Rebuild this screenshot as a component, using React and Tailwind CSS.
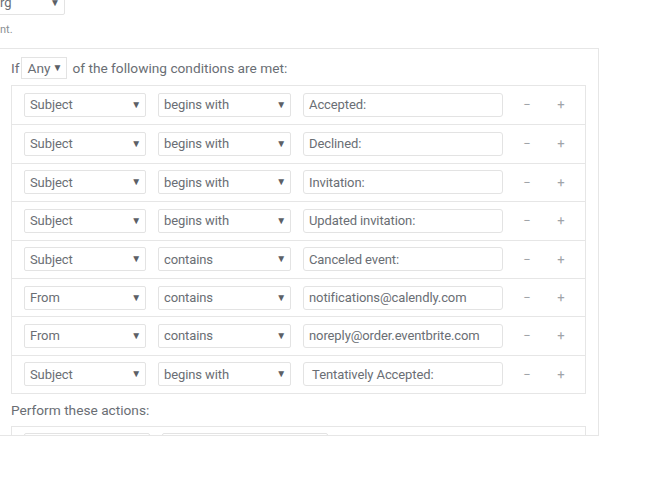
import React from 'react';

const conditions = [
  { field: 'Subject', op: 'begins with', value: 'Accepted:' },
  { field: 'Subject', op: 'begins with', value: 'Declined:' },
  { field: 'Subject', op: 'begins with', value: 'Invitation:' },
  { field: 'Subject', op: 'begins with', value: 'Updated invitation:' },
  { field: 'Subject', op: 'contains', value: 'Canceled event:' },
  { field: 'From', op: 'contains', value: 'notifications@calendly.com' },
  { field: 'From', op: 'contains', value: 'noreply@order.eventbrite.com' },
  { field: 'Subject', op: 'begins with', value: '\u00a0Tentatively Accepted:' },
];

const Arrow = () => <span className="text-[10px] leading-none text-[#5c6066]">▼</span>;

const Select = ({ label, width }) => (
  <div
    className={`flex h-6 items-center justify-between rounded-[2px] border border-[#e3e3e3] bg-white pl-[5px] pr-[4px] text-[13px] tracking-[-0.1px] text-[#6a6e74] ${width}`}
  >
    <span>{label}</span>
    <Arrow />
  </div>
);

const ConditionRow = ({ field, op, value, first }) => (
  <div
    className={`flex h-[38.4px] items-center pl-3 ${first ? '' : 'border-t border-[#e6e6e6]'}`}
  >
    <Select label={field} width="w-[122px]" />
    <div className="ml-3">
      <Select label={op} width="w-[133px]" />
    </div>
    <div className="ml-3 flex h-6 w-[200px] items-center rounded-[3px] border border-[#e3e3e3] bg-white px-[5px] text-[13px] tracking-[-0.1px] text-[#6a6e74]">
      {value}
    </div>
    <span className="ml-[20px] w-[8px] text-center text-[13px] text-[#a0a4a8]">−</span>
    <span className="ml-[26px] w-[8px] text-center text-[13px] text-[#a0a4a8]">+</span>
  </div>
);

export default function App() {
  return (
    <div className="h-[481px] w-[656px] overflow-hidden bg-white font-['Roboto','Liberation_Sans',sans-serif]">
      <div className="-mt-[9px] -ml-[6px] flex h-6 w-[71px] items-center justify-between rounded-[2px] border border-[#e3e3e3] pl-[5px] pr-[4px] text-[13px] text-[#6a6e74]">
        <span>rg</span>
        <Arrow />
      </div>
      <div className="mt-[7px] text-[11px] leading-4 text-[#8a8f94]">nt.</div>

      <div className="-ml-px mt-[10px] h-[388px] w-[600px] overflow-hidden border border-[#e6e6e6] pl-[11px] pr-3">
        <div className="mt-[8px] flex items-center text-[13.7px] text-[#6a6e74]">
          <span>If</span>
          <div className="ml-[2px] flex h-[22px] w-[46px] items-center justify-between border border-[#e3e3e3] pl-[5px] pr-[4px]">
            <span>Any</span>
            <Arrow />
          </div>
          <span className="ml-[5px]">of the following conditions are met:</span>
        </div>

        <div className="mt-[6px] border border-[#e6e6e6]">
          {conditions.map((c, i) => (
            <ConditionRow key={i} {...c} first={i === 0} />
          ))}
        </div>

        <div className="mt-[6px] text-[13.7px] leading-5 text-[#6a6e74]">Perform these actions:</div>

        <div className="mt-[6px] flex h-[40px] border border-[#e6e6e6] pl-3 pt-[6px]">
          <div className="h-6 w-[126px] rounded-[2px] border border-[#e3e3e3]" />
          <div className="ml-3 h-6 w-[166px] rounded-[2px] border border-[#e3e3e3]" />
        </div>
      </div>
    </div>
  );
}
